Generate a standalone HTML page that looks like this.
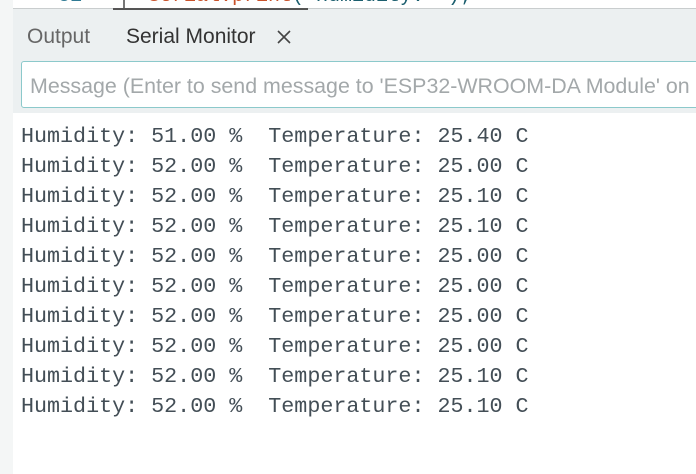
<!DOCTYPE html>
<html><head><style>
html,body{margin:0;padding:0;width:696px;height:474px;overflow:hidden;background:#fff;position:relative;font-family:"Liberation Sans",sans-serif}
.strip{position:absolute;left:0;top:0;width:13px;height:474px;background:#f4f6f6}
.code{position:absolute;left:13px;top:0;width:683px;height:8px;background:#fff;overflow:hidden}
.code .ln{position:absolute;left:45px;top:-15px;font:20px "Liberation Mono",monospace;color:#2f7a94}
.code .bar{position:absolute;left:110px;top:0;width:2px;height:8px;background:#777}
.code .tx{position:absolute;left:135px;top:-15px;font:20px "Liberation Mono",monospace;color:#c9522a;white-space:pre}
.code .tx span{color:#1b5e6e}
.line{position:absolute;left:13px;top:8px;width:683px;height:1px;background:#c9cdce}
.uline{position:absolute;left:113px;top:8px;width:195px;height:2px;background:#555}
.panel{position:absolute;left:13px;top:9px;width:683px;height:104px;background:#ecf0f1}
.tab{position:absolute;top:25px;font-size:21px;color:#4b4b4b}
.input{position:absolute;left:21px;top:61px;width:690px;height:47px;background:#fff;border:1px solid #8cc9cb;border-radius:3px;box-sizing:border-box}
.input span{position:absolute;left:8px;top:12px;font-size:21.4px;color:#a3a8aa;white-space:nowrap}
.out{position:absolute;left:21px;top:122px;font:21.7px/30px "Liberation Mono",monospace;color:#434e56;white-space:pre}
</style></head><body>
<div class="strip"></div>
<div class="code"><div class="ln">31</div><div class="bar"></div><div class="tx">Serial.print<span>("Humidity: ");</span></div></div>
<div class="panel"></div>
<div class="line"></div>
<div class="uline"></div>
<div class="tab" style="left:27px;color:#666">Output</div>
<div class="tab" style="left:126px;color:#333">Serial Monitor</div>
<svg style="position:absolute;left:276px;top:29px" width="16" height="16" viewBox="0 0 16 16"><path d="M2 2L14 14M14 2L2 14" stroke="#444" stroke-width="1.6"/></svg>
<div class="input"><span>Message (Enter to send message to 'ESP32-WROOM-DA Module' on</span></div>
<div class="out">Humidity: 51.00 %  Temperature: 25.40 C
Humidity: 52.00 %  Temperature: 25.00 C
Humidity: 52.00 %  Temperature: 25.10 C
Humidity: 52.00 %  Temperature: 25.10 C
Humidity: 52.00 %  Temperature: 25.00 C
Humidity: 52.00 %  Temperature: 25.00 C
Humidity: 52.00 %  Temperature: 25.00 C
Humidity: 52.00 %  Temperature: 25.00 C
Humidity: 52.00 %  Temperature: 25.10 C
Humidity: 52.00 %  Temperature: 25.10 C</div>
</body></html>
